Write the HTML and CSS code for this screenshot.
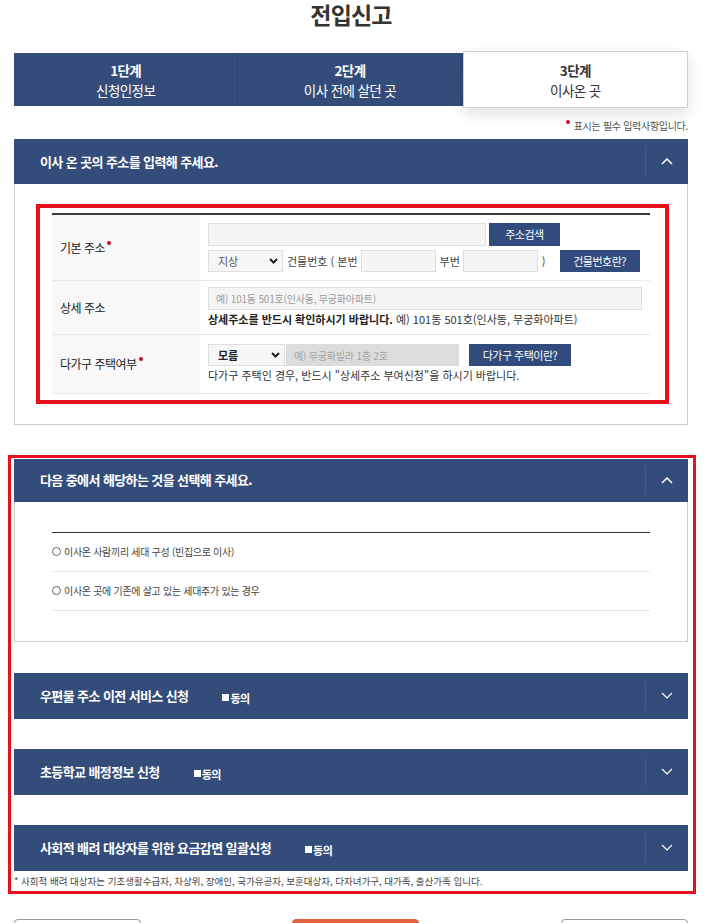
FILE: index.html
```html
<!DOCTYPE html>
<html lang="ko">
<head>
    <meta charset="UTF-8">
    <meta name="viewport" content="width=device-width, initial-scale=1.0">
    <title>전입신고</title>
    <link rel="stylesheet" href="styles.css">
</head>
<body>
    <div class="page">
        <h1 class="title">전입신고</h1>

        <ol class="steps">
            <li class="step"><strong>1단계</strong><span>신청인정보</span></li>
            <li class="step"><strong>2단계</strong><span>이사 전에 살던 곳</span></li>
            <li class="step active"><strong>3단계</strong><span>이사온 곳</span></li>
        </ol>

        <p class="req-note"><i class="dot"></i>표시는 필수 입력사항입니다.</p>

        <!-- 이사 온 곳 주소 -->
        <section class="panel">
            <div class="panel-head">
                <h2>이사 온 곳의 주소를 입력해 주세요.</h2>
                <span class="toggle">
                    <svg width="12" height="7" viewBox="0 0 12 7"><polyline points="1,6 6,1 11,6" fill="none" stroke="#fff" stroke-width="1.5"/></svg>
                </span>
            </div>
            <div class="panel-body">
                <div class="mark">
                    <table class="form-table">
                        <tr class="row-base">
                            <th>기본 주소<i class="req"></i></th>
                            <td>
                                <div class="line">
                                    <input type="text" class="inp w-addr">
                                    <button class="btn w-search">주소검색</button>
                                </div>
                                <div class="line">
                                    <span class="sel w-75">
                                        <select><option>지상</option></select>
                                        <svg width="9" height="6" viewBox="0 0 9 6"><polyline points="1,1 4.5,4.5 8,1" fill="none" stroke="#222" stroke-width="2"/></svg>
                                    </span>
                                    <span class="txt">건물번호 ( 본번</span>
                                    <input type="text" class="inp w-num">
                                    <span class="txt">부번</span>
                                    <input type="text" class="inp w-num">
                                    <span class="txt txt-close">)</span>
                                    <button class="btn w-bldg">건물번호란?</button>
                                </div>
                            </td>
                        </tr>
                        <tr class="row-detail">
                            <th>상세 주소</th>
                            <td>
                                <input type="text" class="inp w-detail" placeholder="예) 101동 501호(인사동, 무궁화아파트)">
                                <p class="desc"><b>상세주소를 반드시 확인하시기 바랍니다.</b> 예) 101동 501호(인사동, 무궁화아파트)</p>
                            </td>
                        </tr>
                        <tr class="row-multi">
                            <th>다가구 주택여부<i class="req"></i></th>
                            <td>
                                <div class="line">
                                    <span class="sel w-77">
                                        <select class="strong"><option>모름</option></select>
                                        <svg width="9" height="6" viewBox="0 0 9 6"><polyline points="1,1 4.5,4.5 8,1" fill="none" stroke="#222" stroke-width="2"/></svg>
                                    </span>
                                    <input type="text" class="inp w-house" placeholder="예) 무궁화빌라 1층 2호" disabled>
                                    <button class="btn w-multi">다가구 주택이란?</button>
                                </div>
                                <p class="desc">다가구 주택인 경우, 반드시 "상세주소 부여신청"을 하시기 바랍니다.</p>
                            </td>
                        </tr>
                    </table>
                </div>
            </div>
        </section>

        <div class="mark mark-wide">
            <section class="panel">
                <div class="panel-head head-short">
                    <h2>다음 중에서 해당하는 것을 선택해 주세요.</h2>
                    <span class="toggle">
                        <svg width="12" height="7" viewBox="0 0 12 7"><polyline points="1,6 6,1 11,6" fill="none" stroke="#fff" stroke-width="1.5"/></svg>
                    </span>
                </div>
                <div class="panel-body body-choice">
                    <ul class="choice-list">
                        <li><i class="radio"></i>이사온 사람끼리 세대 구성 (빈집으로 이사)</li>
                        <li><i class="radio"></i>이사온 곳에 기존에 살고 있는 세대주가 있는 경우</li>
                    </ul>
                </div>
            </section>

            <section class="panel acc acc-first">
                <div class="panel-head acc-head">
                    <h2>우편물 주소 이전 서비스 신청<span class="agree"><i class="box"></i>동의</span></h2>
                    <span class="toggle">
                        <svg width="12" height="7" viewBox="0 0 12 7"><polyline points="1,1 6,6 11,1" fill="none" stroke="#fff" stroke-width="1.2"/></svg>
                    </span>
                </div>
            </section>

            <section class="panel acc">
                <div class="panel-head acc-head">
                    <h2>초등학교 배정정보 신청<span class="agree"><i class="box"></i>동의</span></h2>
                    <span class="toggle">
                        <svg width="12" height="7" viewBox="0 0 12 7"><polyline points="1,1 6,6 11,1" fill="none" stroke="#fff" stroke-width="1.2"/></svg>
                    </span>
                </div>
            </section>

            <section class="panel acc">
                <div class="panel-head acc-head">
                    <h2>사회적 배려 대상자를 위한 요금감면 일괄신청<span class="agree"><i class="box"></i>동의</span></h2>
                    <span class="toggle">
                        <svg width="12" height="7" viewBox="0 0 12 7"><polyline points="1,1 6,6 11,1" fill="none" stroke="#fff" stroke-width="1.2"/></svg>
                    </span>
                </div>
            </section>
            <p class="foot-note">* 사회적 배려 대상자는 기초생활수급자, 차상위, 장애인, 국가유공자, 보훈대상자, 다자녀가구, 대가족, 출산가족 입니다.</p>
        </div>

        <div class="actions">
            <button class="act">이전</button>
            <button class="act act-main">민원신청하기</button>
            <button class="act">취소</button>
        </div>
    </div>
</body>
</html>
```

FILE: styles.css
```css
* {
    box-sizing: border-box;
}
body {
    margin: 0;
    font-family: "Noto Sans CJK KR", "Noto Sans", sans-serif;
    color: #333;
    background: #fff;
}
.page {
    width: 674px;
    margin-left: 14px;
}
.title {
    margin: 0 0 25px;
    font-size: 23px;
    line-height: 28px;
    font-weight: 700;
    text-align: center;
    letter-spacing: -0.8px;
    color: #333;
}

/* 단계 표시 */
.steps {
    display: flex;
    height: 53px;
    margin: 0;
    padding: 0;
    list-style: none;
    background: #344c79;
}
.step {
    flex: 1;
    display: flex;
    flex-direction: column;
    justify-content: center;
    align-items: center;
    color: #fff;
    font-size: 13.5px;
    line-height: 20px;
    letter-spacing: -0.6px;
    border-right: 1px solid #2d446f;
}
.step strong {
    font-weight: 700;
}
.step.active {
    background: #fff;
    color: #333;
    border: 1px solid #cfcfcf;
    margin: -2px 0;
    box-shadow: 0 6px 14px rgba(0,0,0,0.12);
}
.req-note {
    margin: 13px 0 6px;
    text-align: right;
    font-size: 10px;
    line-height: 14px;
    color: #555;
    letter-spacing: -0.3px;
}
.req-note .dot {
    display: inline-block;
    width: 4px;
    height: 4px;
    border-radius: 50%;
    background: #c8102e;
    vertical-align: top;
    margin: 1px 4px 0 0;
}

/* 패널 */
.panel-head {
    display: flex;
    align-items: center;
    height: 45px;
    background: #344c79;
}
.panel-head h2 {
    flex: 1;
    margin: 0;
    padding-left: 26px;
    font-size: 13px;
    line-height: 18px;
    font-weight: 700;
    color: #fff;
    letter-spacing: -0.6px;
}
.toggle {
    width: 43px;
    height: 30px;
    display: flex;
    align-items: center;
    justify-content: center;
    border-left: 1px solid #45598a;
}
.panel-body {
    border: 1px solid #ccc;
    border-top: 0;
    padding: 20px 18px 20px 21px;
}
.mark {
    border: 4px solid #e8101c;
    padding: 5px 15px 6px 12px;
}

/* 주소 입력 표 */
.form-table {
    width: 100%;
    border-collapse: collapse;
    border-top: 2px solid #3b3b3b;
}
.form-table tr {
    border-bottom: 1px solid #e8e8e8;
}
.form-table th {
    width: 149px;
    background: #f8f8f8;
    text-align: left;
    font-weight: 400;
    padding: 0 0 0 8px;
    font-size: 12px;
    color: #222;
    letter-spacing: -0.5px;
}
.form-table td {
    padding: 0 8px;
    font-size: 11px;
    color: #444;
    letter-spacing: 0;
}
.row-base td { height: 66px; }
.row-detail td { height: 54px; }
.row-multi td { height: 59px; }
.req {
    display: inline-block;
    width: 4px;
    height: 4px;
    border-radius: 50%;
    background: #c8102e;
    vertical-align: 8px;
    margin-left: 2px;
}
.line {
    display: flex;
    align-items: center;
}
.line + .line {
    margin-top: 4px;
}
.inp {
    height: 23px;
    border: 1px solid #dedede;
    background: #f5f5f5;
    padding: 0 7px;
    font-family: inherit;
    font-size: 10px;
    color: #333;
    letter-spacing: -0.2px;
}
.inp::placeholder {
    color: #9a9a9a;
}
.inp:disabled {
    background: #dcdcdc;
    border-color: #dcdcdc;
}
.inp:disabled::placeholder {
    color: #a5a5a5;
}
.btn {
    height: 23px;
    border: 0;
    padding: 0;
    background: #304b7c;
    color: #fff;
    font-family: inherit;
    font-size: 11px;
    letter-spacing: -0.5px;
}
.w-addr { width: 278px; }
.w-search { width: 71px; margin-left: 3px; }
.w-num { width: 75px; height: 22px; }
.w-bldg { width: 80px; height: 22px; }
.w-detail { width: 434px; display: block; }
.w-house { width: 173px; height: 22px; margin-left: 1px; }
.w-multi { width: 102px; height: 22px; margin-left: 10px; }
.txt {
    margin: 0 3px 0 4px;
    color: #444;
}
.txt-close {
    margin: 0 14px 0 4px;
}
.sel {
    position: relative;
    display: inline-flex;
}
.sel select {
    width: 100%;
    height: 22px;
    appearance: none;
    -webkit-appearance: none;
    border: 1px solid #dedede;
    border-radius: 0;
    background: #f6f6f6;
    padding: 0 0 0 9px;
    font-family: inherit;
    font-size: 11px;
    color: #555;
}
.sel select.strong {
    color: #222;
    font-weight: 700;
}
.sel svg {
    position: absolute;
    right: 5px;
    top: 8px;
    pointer-events: none;
}
.w-75 { width: 75px; }
.w-77 { width: 77px; }
.desc {
    margin: 1px 0 0;
    line-height: 16px;
    color: #333;
}
.desc b {
    color: #222;
}

/* 선택 영역 */
.mark-wide {
    margin: 30px -8px 0 -6px;
    border-width: 3px;
    padding: 1px 5px 3px 3px;
}
.head-short {
    height: 43px;
}
.body-choice {
    padding: 30px 37px;
}
.choice-list {
    margin: 0;
    padding: 0;
    list-style: none;
    border-top: 1px solid #333;
}
.choice-list li {
    height: 39px;
    display: flex;
    align-items: center;
    border-bottom: 1px solid #e8e8e8;
    font-size: 10px;
    color: #444;
    letter-spacing: -0.3px;
}
.radio {
    width: 9px;
    height: 9px;
    border: 1px solid #666;
    border-radius: 50%;
    margin-right: 3px;
}
.acc {
    margin-top: 30px;
}
.acc-first {
    margin-top: 31px;
}
.acc-head {
    height: 46px;
}
.acc-head h2 {
    display: flex;
    align-items: center;
}
.agree {
    display: inline-flex;
    align-items: center;
    margin-left: 34px;
    padding-top: 4px;
    font-size: 11px;
    letter-spacing: -0.5px;
}
.box {
    width: 7px;
    height: 7px;
    background: #fff;
    margin-right: 1px;
}
.foot-note {
    margin: 3px 0 0;
    font-size: 9.5px;
    line-height: 14px;
    color: #444;
    letter-spacing: 0;
}

/* 하단 버튼 */
.actions {
    display: flex;
    justify-content: space-between;
    margin: 25px 0 40px;
}
.act {
    width: 127px;
    height: 40px;
    border: 1px solid #999;
    border-radius: 4px;
    background: #fff;
    font-family: inherit;
    font-size: 14px;
    color: #333;
}
.act-main {
    margin-left: 8px;
    border-color: #e2613f;
    background: #e2613f;
    color: #fff;
}
```
